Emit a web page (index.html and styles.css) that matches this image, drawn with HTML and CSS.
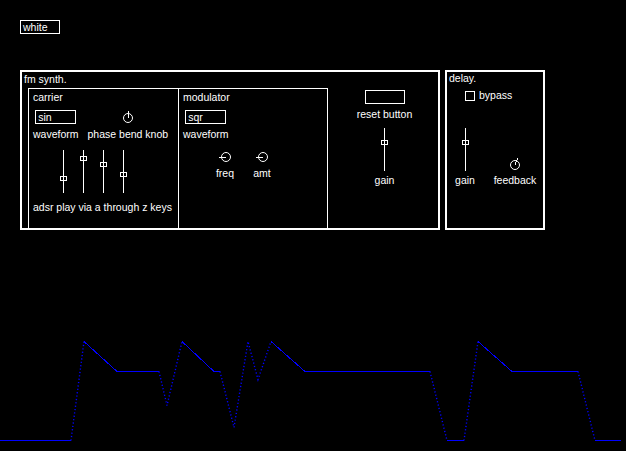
FILE: index.html
```html
<!DOCTYPE html>
<html>
<head>
<meta charset="utf-8">
<title>fm synth</title>
<link rel="stylesheet" href="styles.css">
</head>
<body>
<div class="page">
  <div class="preset">white</div>
  <div class="synth-row">
    <div class="panel fm">
      <div class="panel-title">fm synth.</div>
      <div class="fm-body">
        <div class="section carrier">
          <div class="label">carrier</div>
          <div class="ctl-row">
            <div class="col">
              <div class="menu">sin</div>
              <div class="label gap4">waveform</div>
            </div>
            <div class="col">
              <svg class="knob" width="14" height="14" viewBox="0 0 14 14"><circle cx="7" cy="8" r="4.5" /><line x1="7.5" y1="8" x2="7.5" y2="1" /></svg>
              <div class="label gap4">phase bend knob</div>
            </div>
          </div>
          <div class="slider-row">
            <svg class="slider" width="7" height="43" viewBox="0 0 7 43"><line x1="3.5" y1="0" x2="3.5" y2="43" /><rect x="0.5" y="26.5" width="6" height="4" /></svg>
            <svg class="slider" width="7" height="43" viewBox="0 0 7 43"><line x1="3.5" y1="0" x2="3.5" y2="43" /><rect x="0.5" y="6.5" width="6" height="4" /></svg>
            <svg class="slider" width="7" height="43" viewBox="0 0 7 43"><line x1="3.5" y1="0" x2="3.5" y2="43" /><rect x="0.5" y="12.5" width="6" height="4" /></svg>
            <svg class="slider" width="7" height="43" viewBox="0 0 7 43"><line x1="3.5" y1="0" x2="3.5" y2="43" /><rect x="0.5" y="22.5" width="6" height="4" /></svg>
          </div>
          <div class="label gap8">adsr play via a through z keys</div>
        </div>
        <div class="section modulator">
          <div class="label">modulator</div>
          <div class="ctl-row">
            <div class="col">
              <div class="menu">sqr</div>
              <div class="label gap4">waveform</div>
            </div>
          </div>
          <div class="knob-row">
            <div class="kcol">
              <svg class="knob" width="14" height="14" viewBox="0 0 14 14"><circle cx="8" cy="7" r="4.5" /><line x1="1" y1="7.5" x2="8" y2="7.5" /></svg>
              <div class="label gap3">freq</div>
            </div>
            <div class="kcol">
              <svg class="knob" width="14" height="14" viewBox="0 0 14 14"><circle cx="8" cy="7" r="4.5" /><line x1="1" y1="7.5" x2="8" y2="7.5" /></svg>
              <div class="label gap3">amt</div>
            </div>
          </div>
        </div>
        <div class="section master">
          <div class="button"></div>
          <div class="label gap4">reset button</div>
          <svg class="slider gap7" width="7" height="43" viewBox="0 0 7 43"><line x1="3.5" y1="0" x2="3.5" y2="43" /><rect x="0.5" y="12.5" width="6" height="4" /></svg>
          <div class="label gap3">gain</div>
        </div>
      </div>
    </div>
    <div class="panel delay">
      <div class="label">delay.</div>
      <div class="bypass">
        <span class="checkbox"></span>
        <span class="label">bypass</span>
      </div>
      <div class="delay-controls">
        <div class="kcol">
          <svg class="slider" width="7" height="43" viewBox="0 0 7 43"><line x1="3.5" y1="0" x2="3.5" y2="43" /><rect x="0.5" y="12.5" width="6" height="4" /></svg>
          <div class="label gap3">gain</div>
        </div>
        <div class="kcol wide">
          <svg class="knob" width="14" height="14" viewBox="0 0 14 14"><circle cx="7" cy="8" r="4.5" /><line x1="7" y1="8" x2="9.5" y2="1.5" /></svg>
          <div class="label gap3">feedback</div>
        </div>
      </div>
    </div>
  </div>
</div>
<svg class="scope" width="626" height="221" viewBox="0 230 626 221">
  <g class="trace-solid">
    <polyline points="0,440.5 71,440.5" />
    <polyline points="84,341.5 117,371.5 159,371.5" />
    <polyline points="182,341.5 214,371.5 220,371.5" />
    <polyline points="271,341.5 305,371.5 430,371.5" />
    <polyline points="447,440.5 464,440.5" />
    <polyline points="478,341.5 512,371.5 578,371.5" />
    <polyline points="595,440.5 621,440.5" />
  </g>
  <g class="trace-dots">
    <polyline points="71,440.5 84,341.5" />
    <polyline points="159,371.5 167,405.5 182,341.5" />
    <polyline points="220,371.5 234,427.5 248,341.5 258,379.5 271,341.5" />
    <polyline points="430,371.5 447,440.5" />
    <polyline points="464,440.5 478,341.5" />
    <polyline points="578,371.5 595,440.5" />
  </g>
</svg>
</body>
</html>
```
FILE: styles.css
```css
* { box-sizing: border-box; }

html, body {
  margin: 0;
  background: #000;
  color: #fff;
  font-family: "Liberation Sans", Arial, sans-serif;
  font-size: 10.5px;
  overflow: hidden;
}

.page {
  padding: 20px 0 0 20px;
}

.label {
  line-height: 13px;
  white-space: nowrap;
}

.gap3 { margin-top: 3px; }
.gap4 { margin-top: 4px; }
.gap7 { margin-top: 7px; }
.gap8 { margin-top: 8px; }

.preset {
  width: 40px;
  height: 14px;
  border: 1px solid #fff;
  padding-left: 2px;
  line-height: 12px;
}

.synth-row {
  display: flex;
  gap: 5px;
  margin-top: 36px;
}

.panel {
  height: 160px;
  border: 2px solid #fff;
}

.fm {
  width: 420px;
  display: flex;
  flex-direction: column;
}

.panel-title {
  padding: 1px 2px 2px;
  line-height: 13px;
}

.fm-body {
  flex: 1;
  display: flex;
  margin-left: 6px;
}

.section {
  padding: 2px 4px;
}

.carrier {
  width: 151px;
  border: 1px solid #fff;
  border-bottom: none;
}

.modulator {
  width: 149px;
  border-top: 1px solid #fff;
  border-right: 1px solid #fff;
}

.master {
  flex: 1;
  display: flex;
  flex-direction: column;
  align-items: center;
  padding: 2px 0 0 3px;
}

.ctl-row {
  display: flex;
  gap: 9px;
  margin-top: 6px;
}

.col {
  display: flex;
  flex-direction: column;
  align-items: center;
}

.menu {
  width: 41px;
  height: 14px;
  border: 1px solid #fff;
  padding-left: 2px;
  line-height: 12px;
  align-self: center;
}

.button {
  width: 40px;
  height: 14px;
  border: 1px solid #fff;
}

svg { display: block; }

.knob circle {
  fill: none;
  stroke: #fff;
  stroke-width: 1;
}

.knob line,
.slider line {
  stroke: #fff;
  stroke-width: 1;
  shape-rendering: crispEdges;
}

.slider rect {
  fill: none;
  stroke: #fff;
  stroke-width: 1;
  shape-rendering: crispEdges;
}

.slider-row {
  display: flex;
  gap: 13px;
  margin-top: 9px;
  padding-left: 27px;
}

.knob-row {
  display: flex;
  gap: 13px;
  margin-top: 9px;
  padding-left: 30px;
}

.kcol {
  width: 24px;
  display: flex;
  flex-direction: column;
  align-items: center;
}

.kcol.wide { width: 50px; }

.delay {
  width: 100px;
  padding: 0 2px;
}

.bypass {
  display: flex;
  align-items: center;
  gap: 4px;
  margin-top: 4px;
  padding-left: 16px;
}

.checkbox {
  width: 10px;
  height: 10px;
  border: 1px solid #fff;
}

.delay-controls {
  display: flex;
  align-items: flex-end;
  gap: 13px;
  margin-top: 26px;
  padding-left: 4px;
}

.scope polyline {
  fill: none;
  stroke: #0000ff;
  stroke-width: 1;
}

.trace-solid polyline {
  shape-rendering: crispEdges;
}

.trace-dots polyline {
  stroke-width: 1.4;
  stroke-dasharray: 1.2 2.2;
}
```
